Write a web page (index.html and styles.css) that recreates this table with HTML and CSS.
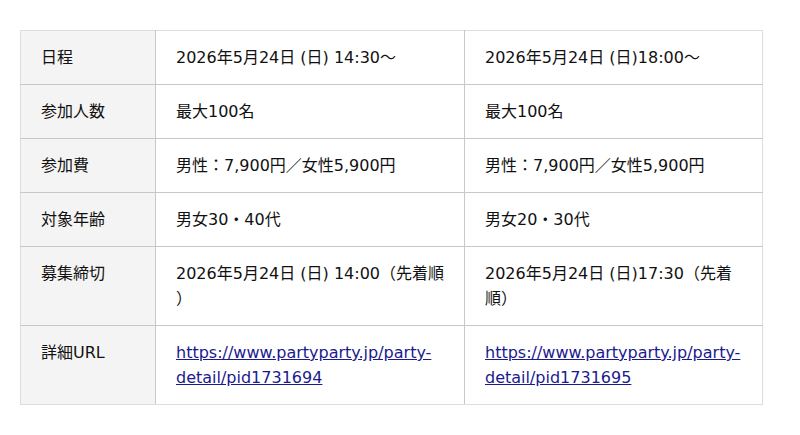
FILE: index.html
```html
<!DOCTYPE html>
<html lang="ja">
<head>
<meta charset="utf-8">
<link rel="stylesheet" href="styles.css">
</head>
<body>
<table class="info">
  <colgroup><col class="c1"><col class="c2"><col class="c3"></colgroup>
  <tr><th>日程</th><td>2026年5月24日 (日) 14:30〜</td><td>2026年5月24日 (日)18:00〜</td></tr>
  <tr><th>参加人数</th><td>最大100名</td><td>最大100名</td></tr>
  <tr><th>参加費</th><td>男性：7,900円／女性5,900円</td><td>男性：7,900円／女性5,900円</td></tr>
  <tr><th>対象年齢</th><td>男女30・40代</td><td>男女20・30代</td></tr>
  <tr><th>募集締切</th><td class="nw">2026年5月24日 (日) 14:00（先着順<br>）</td><td class="nw">2026年5月24日 (日)17:30（先着<br>順）</td></tr>
  <tr><th>詳細URL</th><td class="nw"><a href="#">https://www.partyparty.jp/party-<br>detail/pid1731694</a></td><td class="nw"><a href="#">https://www.partyparty.jp/party-<br>detail/pid1731695</a></td></tr>
</table>
</body>
</html>
```
FILE: styles.css
```css
html, body { margin: 0; padding: 0; background: #fff; }
body { padding: 30px 20px; font-family: "DejaVu Sans", "Noto Sans CJK JP", sans-serif; font-size: 16px; color: #111; }
.info { border-collapse: collapse; width: 742px; table-layout: fixed; border: 1px solid #ddd; }
.c1 { width: 135px; }
.c2 { width: 309px; }
.c3 { width: 298px; }
.info th, .info td { border: 1px solid #c8c8c8; padding: 14px 20px; line-height: 25px; text-align: left; vertical-align: top; font-weight: normal; }
.info .nw { white-space: nowrap; }
.info th { background: #f4f4f4; }
.info tr:first-child th, .info tr:first-child td { border-top-color: #ddd; }
.info tr:last-child th, .info tr:last-child td { border-bottom-color: #ddd; }
.info th { border-left-color: #ddd; }
.info td:last-child { border-right-color: #ddd; }
.info a { color: #1a1a8e; text-decoration: underline; }
```
